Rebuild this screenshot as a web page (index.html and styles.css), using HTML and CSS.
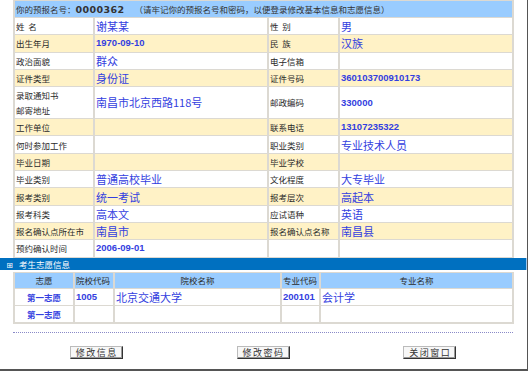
FILE: index.html
```html
<!DOCTYPE html>
<html lang="zh">
<head>
  <meta charset="UTF-8" />
  <title>预报名信息</title>
  <link rel="stylesheet" href="styles.css">
</head>
<body>
  <div class="window">
    <table class="info">
      <colgroup><col class="c1"><col class="c2"><col class="c3"><col class="c4"></colgroup>
      <tr class="notice">
        <td colspan="4">你的预报名号：<b>0000362</b><span class="tip">（请牢记你的预报名号和密码，以便登录修改基本信息和志愿信息）</span></td>
      </tr>
      <tr>
        <td class="lbl">姓&nbsp;&nbsp;名</td><td class="val">谢某某</td>
        <td class="lbl">性&nbsp;&nbsp;别</td><td class="val">男</td>
      </tr>
      <tr class="alt">
        <td class="lbl">出生年月</td><td class="num">1970-09-10</td>
        <td class="lbl">民&nbsp;&nbsp;族</td><td class="val">汉族</td>
      </tr>
      <tr>
        <td class="lbl">政治面貌</td><td class="val">群众</td>
        <td class="lbl">电子信箱</td><td class="val"></td>
      </tr>
      <tr class="alt">
        <td class="lbl">证件类型</td><td class="val">身份证</td>
        <td class="lbl">证件号码</td><td class="num">360103700910173</td>
      </tr>
      <tr class="tall">
        <td class="lbl">录取通知书<br>邮寄地址</td><td class="val">南昌市北京西路118号</td>
        <td class="lbl">邮政编码</td><td class="num">330000</td>
      </tr>
      <tr class="alt">
        <td class="lbl">工作单位</td><td class="val"></td>
        <td class="lbl">联系电话</td><td class="num">13107235322</td>
      </tr>
      <tr>
        <td class="lbl">何时参加工作</td><td class="val"></td>
        <td class="lbl">职业类别</td><td class="val">专业技术人员</td>
      </tr>
      <tr class="alt">
        <td class="lbl">毕业日期</td><td class="val"></td>
        <td class="lbl">毕业学校</td><td class="val"></td>
      </tr>
      <tr>
        <td class="lbl">毕业类别</td><td class="val">普通高校毕业</td>
        <td class="lbl">文化程度</td><td class="val">大专毕业</td>
      </tr>
      <tr class="alt">
        <td class="lbl">报考类别</td><td class="val">统一考试</td>
        <td class="lbl">报考层次</td><td class="val">高起本</td>
      </tr>
      <tr>
        <td class="lbl">报考科类</td><td class="val">高本文</td>
        <td class="lbl">应试语种</td><td class="val">英语</td>
      </tr>
      <tr class="alt">
        <td class="lbl">报名确认点所在市</td><td class="val">南昌市</td>
        <td class="lbl">报名确认点名称</td><td class="val">南昌县</td>
      </tr>
      <tr>
        <td class="lbl">预约确认时间</td><td class="num">2006-09-01</td>
        <td class="lbl"></td><td class="val"></td>
      </tr>
    </table>

    <div class="bar"><span class="plus">⊞</span>考生志愿信息</div>

    <table class="wish">
      <colgroup><col class="w1"><col class="w2"><col class="w3"><col class="w4"><col class="w5"></colgroup>
      <tr class="head">
        <td>志愿</td><td class="left">院校代码</td><td>院校名称</td><td class="left">专业代码</td><td>专业名称</td>
      </tr>
      <tr>
        <td class="order">第一志愿</td><td class="num">1005</td><td class="val">北京交通大学</td>
        <td class="num">200101</td><td class="val">会计学</td>
      </tr>
      <tr>
        <td class="order">第一志愿</td><td></td><td></td><td></td><td></td>
      </tr>
    </table>

    <div class="dots"></div>

    <div class="actions">
      <div class="slot"><button>修改信息</button></div>
      <div class="slot"><button>修改密码</button></div>
      <div class="slot"><button>关闭窗口</button></div>
    </div>
  </div>
</body>
</html>
```

FILE: styles.css
```css
body {
  margin: 0;
  background: #fff;
  font-family: "Noto Sans CJK SC", "DejaVu Sans", sans-serif;
  font-size: 9px;
  color: #2a2a2a;
}

.window {
  box-sizing: border-box;
  width: 528px;
  height: 371px;
  border-right: 1px solid #555;
  border-bottom: 2px solid #555;
}

table {
  table-layout: fixed;
  border-collapse: separate;
  border-spacing: 2px 1px;
  background: #dcd9d2;
  margin-left: 13px;
  width: 501px;
}

td {
  padding: 0 1px;
  height: 16.3px;
  line-height: 14px;
  white-space: nowrap;
  overflow: hidden;
  vertical-align: middle;
}

.info .c1 { width: 78px; }
.info .c2 { width: 172px; }
.info .c3 { width: 69px; }
.info .c4 { width: 172px; }

.info tr { background: #fff; }
.info tr.alt { background: #fff2c6; }
.info tr.tall td { height: 31px; line-height: 15px; }

.notice td {
  background: #99ccff;
  height: 16px;
  color: #333;
  font-size: 8.5px;
}

.notice b {
  font-family: "DejaVu Sans", sans-serif;
  font-size: 9.5px;
  letter-spacing: 0.4px;
}

.tip {
  margin-left: 10px;
}

.lbl {
  color: #2a2a2a;
  font-size: 8.5px;
}

.val {
  color: #3340e0;
  font-size: 11px;
}

.num {
  color: #3340e0;
  font-family: "Liberation Sans", Arial, sans-serif;
  font-weight: bold;
  font-size: 9.5px;
}

.bar {
  height: 12px;
  line-height: 12px;
  background: #0070c0;
  border-right: 1px solid #9cc8f0;
  width: 526px;
  color: #fff;
  font-size: 8.5px;
}

.plus {
  display: inline-block;
  width: 19px;
  text-align: center;
  font-size: 8px;
}

.wish {
  margin-top: 2px;
  border-bottom: 1px solid #dcd9d2;
}

.wish .w1 { width: 58px; }
.wish .w2 { width: 38px; }
.wish .w3 { width: 165px; }
.wish .w4 { width: 37px; }
.wish .w5 { width: 191px; }

.wish tr { background: #fff; }

.wish tr.head td {
  background: #99ccff;
  text-align: center;
  height: 15px;
  font-size: 8.5px;
}

.wish tr.head td.left { text-align: left; }

.order {
  text-align: center;
  color: #3340e0;
  font-weight: bold;
  font-size: 8.5px;
}

.dots {
  margin: 8px 0 0 13px;
  width: 500px;
  border-top: 1px dotted #8a8ac8;
}

.actions {
  display: flex;
  margin: 13px 0 0 13px;
  width: 500px;
}

.slot {
  flex: 1;
  display: flex;
  justify-content: center;
}

button {
  font-family: "Noto Sans CJK SC", sans-serif;
  font-size: 9px;
  color: #333;
  letter-spacing: 1.5px;
  white-space: nowrap;
  height: 13px;
  width: 53px;
  padding: 0 0 0 1px;
  line-height: 11px;
  background: #f7f7f7;
  border: 1px solid;
  border-color: #bbb #333 #333 #bbb;
  box-shadow: inset -1px -1px 0 #999;
}
```
